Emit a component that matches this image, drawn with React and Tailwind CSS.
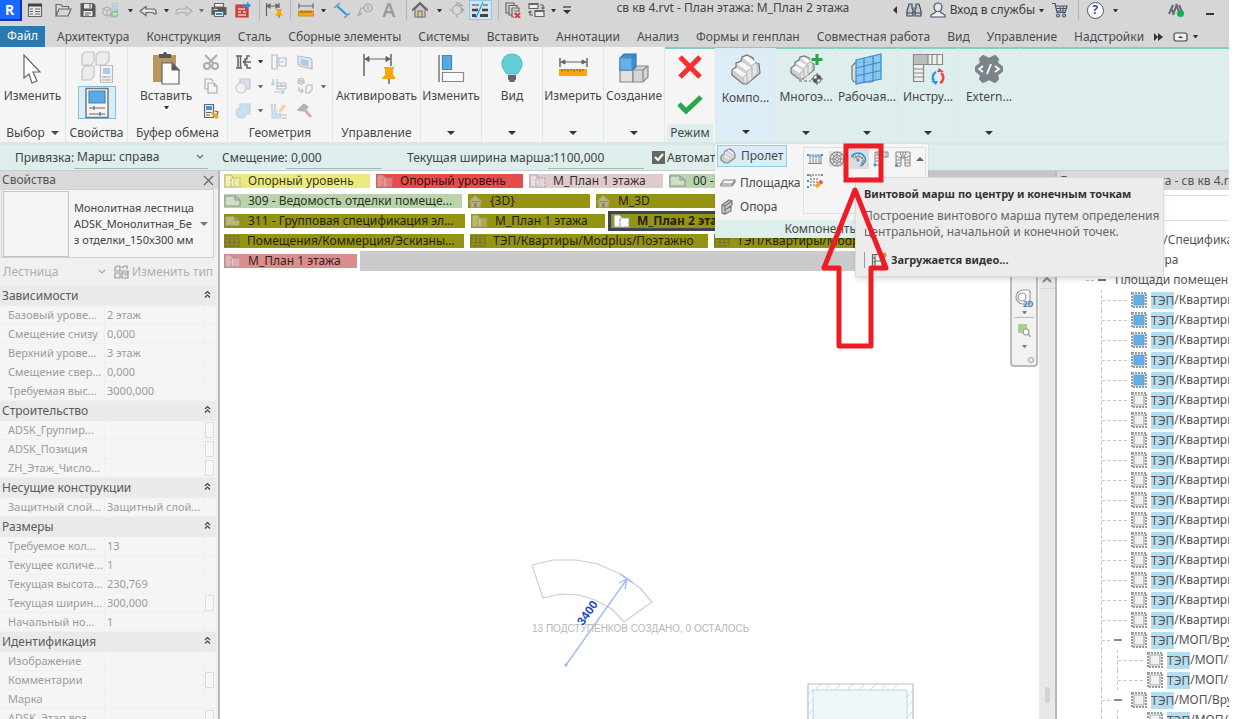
import clsx from "clsx";

const menuTabs = [
  "Архитектура",
  "Конструкция",
  "Сталь",
  "Сборные элементы",
  "Системы",
  "Вставить",
  "Аннотации",
  "Анализ",
  "Формы и генплан",
  "Совместная работа",
  "Вид",
  "Управление",
  "Надстройки"
];

const viewTabs = [
  [
    { text: "Опорный уровень", icon: "plan", cls: "w-[146px] bg-[#ebea80]" },
    { text: "Опорный уровень", icon: "plan", cls: "w-[147px] bg-[#e54c4c]" },
    { text: "М_План 1 этажа", icon: "plan", cls: "w-[134px] bg-[#dfcacc]" },
    { text: "00 - Общие данные", icon: "sheet", cls: "w-[180px] bg-[#b9d3ab]" }
  ],
  [
    { text: "309 - Ведомость отделки помеще...", icon: "sheet", cls: "w-[238px] bg-[#b9d3ab]" },
    { text: "{3D}", icon: "house", cls: "w-[122px] bg-[#959312]" },
    { text: "М_3D", icon: "house", cls: "w-[180px] bg-[#959312]" }
  ],
  [
    { text: "311 - Групповая спецификация эл...", icon: "sheet", cls: "w-[241px] bg-[#959312]" },
    { text: "М_План 1 этажа", icon: "plan", cls: "w-[134px] bg-[#959312]" },
    { text: "М_План 2 этажа", icon: "plan", active: true, cls: "w-[160px] bg-[#959312]" }
  ],
  [
    { text: "Помещения/Коммерция/Эскизны...", icon: "grid", cls: "w-[240px] bg-[#959312]" },
    { text: "ТЭП/Квартиры/Modplus/Поэтажно", icon: "grid", cls: "w-[238px] bg-[#959312]" },
    { text: "ТЭП/Квартиры/Modplus/Сводная", icon: "grid", cls: "w-[240px] bg-[#959312]" }
  ]
];

const propertyGroups = [
  {
    title: "Зависимости",
    rows: [
      ["Базовый урове...", "2 этаж"],
      ["Смещение снизу", "0,000"],
      ["Верхний урове...", "3 этаж"],
      ["Смещение свер...", "0,000"],
      ["Требуемая выс...", "3000,000"]
    ]
  },
  {
    title: "Строительство",
    rows: [
      ["ADSK_Группир...", "", true],
      ["ADSK_Позиция", "", true],
      ["ZH_Этаж_Число...", "", true]
    ]
  },
  { title: "Несущие конструкции", rows: [["Защитный слой...", "Защитный слой..."]] },
  {
    title: "Размеры",
    rows: [
      ["Требуемое кол...", "13"],
      ["Текущее количе...", "1"],
      ["Текущая высота...", "230,769"],
      ["Текущая ширин...", "300,000", true],
      ["Начальный но...", "1"]
    ]
  },
  {
    title: "Идентификация",
    rows: [
      ["Изображение", ""],
      ["Комментарии", "", true],
      ["Марка", ""],
      ["ADSK_Этап воз...", "", true]
    ]
  }
];

const treeRows = [
  ...Array(5).fill({ kind: "filled", text: "/Квартиры" }),
  ...Array(12).fill({ kind: "plain", text: "/Квартиры" }),
  { kind: "parent", text: "/МОП/Вру" },
  { kind: "child", text: "/МОП/Вру" },
  { kind: "child", text: "/МОП/Вру" },
  { kind: "parent", text: "/МОП/Вру" },
  { kind: "child", text: "/МОП/Вру" }
];

function Icon({ w = 16, h = 16, className, children }) {
  return (
    <svg
      width={w}
      height={h}
      viewBox={`0 0 ${w} ${h}`}
      fill="none"
      stroke="#666"
      strokeWidth="1.2"
      className={clsx("block shrink-0", className)}
      aria-hidden="true"
    >
      {children}
    </svg>
  );
}

function Caret({ className, up }) {
  return (
    <svg width="8" height="4" viewBox="0 0 8 4" className={clsx("block shrink-0", className)} aria-hidden="true">
      <path d={up ? "M0 4h8L4 0z" : "M0 0h8L4 4z"} fill="currentColor" />
    </svg>
  );
}

function SmallCaret() {
  return (
    <svg width="5" height="3" viewBox="0 0 5 3" className="block shrink-0 text-[#333]" aria-hidden="true">
      <path d="M0 0h5L3 3H2z" fill="currentColor" />
    </svg>
  );
}

function Slot({ label, className, children }) {
  return (
    <button type="button" aria-label={label} className={clsx("flex h-5 shrink-0 items-center justify-center", className)}>
      {children}
    </button>
  );
}

function Sep({ className }) {
  return (
    <span className={clsx("flex h-5 shrink-0 justify-center", className)}>
      <span className="h-5 w-px bg-[#b4b4b4]" />
    </span>
  );
}

function TitleBar() {
  return (
    <header className="flex h-[26px] items-start overflow-hidden">
      <button type="button" aria-label="Revit" className="h-[21px] w-[22px] shrink-0 border-b-2 border-r-2 border-[#0b3aa8] bg-[#1769ff] pr-px text-[14px] leading-[19px] font-bold text-white">
        R
      </button>
      <Slot label="Главная" className="w-[26px]">
        <Icon>
          <path d="M1.500 2.500h13v12h-13z" fill="#e8e8e8" />
          <path d="M1 3h14" strokeWidth="3" stroke="#444" />
          <path d="M3 7h3M3 9.500h3M3 12h3M8 7h5M8 9.500h5M8 12h5" stroke="#54687a" />
        </Icon>
      </Slot>
      <Slot label="Открыть" className="w-[30px]">
        <Icon w={17}>
          <path d="M1 14V2.500h5l1.500 2h6V7M1 14l3-7h12l-3 7z" />
        </Icon>
      </Slot>
      <Slot label="Сохранить" className="w-5">
        <Icon>
          <path d="M1 1.500h12l2 2v11H1z" fill="#555" />
          <path d="M4 2h8v4.500H4zM3.500 9h9v5h-9z" fill="#e6e6e6" stroke="none" />
          <path d="M5 11h6M5 13h4M10 2v4" />
        </Icon>
      </Slot>
      <Slot label="Синхронизация" className="w-[26px]">
        <Icon w={18} className="opacity-60">
          <path d="M1 7l4-2 4 2v5l-4 2-4-2zM1 7l4 2 4-2M5 9v5" stroke="#999" fill="#ddd" />
          <path d="M10 2h6v6h-6z" fill="#a9cbe6" stroke="none" />
          <ellipse cx="13" cy="2.500" rx="3" ry="1.500" fill="#c6dff0" stroke="#8bb3d3" strokeWidth="0.800" />
          <path d="M9 12a4 4 0 016-2M16 12a4 4 0 01-6 2" stroke="#5cb874" strokeWidth="1.800" />
          <path d="M16 7v4h-4zM8 16v-4h4z" fill="#5cb874" stroke="none" />
        </Icon>
      </Slot>
      <Slot label="Варианты синхронизации" className="w-3"><SmallCaret /></Slot>
      <Slot label="Отменить" className="w-6">
        <Icon w={18}>
          <path d="M1 9l6-4.500V7h7c2 0 3 1 3 3v2h-2c0-1-.5-1.500-2-1.500H7V13.500z" fill="#e4e4e4" />
        </Icon>
      </Slot>
      <Slot label="Список отмены" className="w-3"><SmallCaret /></Slot>
      <Slot label="Повторить" className="w-6">
        <Icon w={18}>
          <path d="M17 9l-6-4.500V7H4c-2 0-3 1-3 3v2h2c0-1 .5-1.500 2-1.500h6V13.500z" stroke="#b1b1b1" />
        </Icon>
      </Slot>
      <Slot label="Список повтора" className="w-[10px] opacity-60"><SmallCaret /></Slot>
      <Slot label="Печать" className="w-[26px]">
        <Icon>
          <path d="M3.500 1.500h9V5h-9z" fill="#eee" />
          <path d="M1 5.500h14v7H1z" fill="#555" />
          <path d="M3.500 9.500h9v5h-9z" fill="#f2f2f2" />
          <path d="M5 12h6" stroke="#2f8bd0" strokeWidth="2" />
          <path d="M2.500 7.500h4" stroke="#ddd" />
        </Icon>
      </Slot>
      <Slot label="Экспорт в PDF" className="w-[22px]">
        <Icon>
          <path d="M1 3h10l2 3v9H1z" fill="#d24545" stroke="#c03434" />
          <path d="M3 7h7M3 10h3M8 10h3M3 13h8" stroke="#fff" />
          <path d="M8 2.500h4V0l4 3.500L12 7V5H8z" fill="#2490e0" stroke="none" />
        </Icon>
      </Slot>
      <Sep className="w-[10px]" />
      <Slot label="Активировать размеры" className="w-5">
        <Icon w={18}>
          <path d="M1.500 1v13M14 1v5M2 4h12M2 4l3-2v4zM14 4l-3-2v4z" />
          <path d="M11 7h6v1.500h-1V11l2 2.500h-8L12 11V8.500h-1z" fill="#fca50c" stroke="none" />
          <path d="M14 13v4" stroke="#777" />
        </Icon>
      </Slot>
      <Sep className="w-3" />
      <Slot label="Измерить" className="w-5">
        <Icon>
          <path d="M1 4h14M1 1.500v5M15 1.500v5" />
          <path d="M.5 9h15v5H.5z" fill="#f7a51c" stroke="#d98a10" strokeWidth="1" />
          <path d="M3 9v2M5 9v2M7 9v2M9 9v2M11 9v2M13 9v2" stroke="#8a5a0c" strokeWidth="1" />
        </Icon>
      </Slot>
      <Slot label="Варианты измерения" className="w-[14px]"><SmallCaret /></Slot>
      <Slot label="Параллельный размер" className="w-6">
        <Icon>
          <path d="M3 4l10 9" stroke="#2f95dc" strokeWidth="2" />
          <path d="M0 6l6-5M10 16l6-5" stroke="#5d9bc6" strokeWidth="1.500" />
        </Icon>
      </Slot>
      <Slot label="Марка" className="w-[22px]">
        <Icon className="opacity-60">
          <circle cx="11" cy="6" r="4" stroke="#888" />
          <path d="M11 4v4M10 5l1-1M7 6H4l-3 8M1 14l4-3" stroke="#888" />
        </Icon>
      </Slot>
      <Slot label="Текст" className="w-[26px] text-[19px] leading-5 font-semibold text-[#9b9b9b]">A</Slot>
      <Sep className="w-2" />
      <Slot label="3D вид" className="w-5">
        <Icon>
          <path d="M3 7v8h10V7L8 2z" fill="#c9c9c9" stroke="#777" />
          <path d="M0 8.500L8 1l8 7.500" strokeWidth="1.800" />
          <path d="M6 9h4v6H6z" fill="#f2c766" stroke="#777" />
        </Icon>
      </Slot>
      <Slot label="Варианты 3D" className="w-[18px]"><SmallCaret /></Slot>
      <Slot label="Разрез" className="w-[18px]">
        <Icon>
          <circle cx="8" cy="8" r="4.500" stroke="#aaa" />
          <path d="M0 8h3M8 13v3M8 0l5 3.500L8 3z" stroke="#aaa" />
          <path d="M11 4l5 4-5 4 1.500-4z" fill="#aaa" stroke="none" />
        </Icon>
      </Slot>
      <Slot label="Тонкие линии" className="w-7">
        <span className="flex h-5 w-[23px] items-center justify-center border border-[#8cc8e8] bg-[#cfe6f2]">
          <Icon w={18}>
            <path d="M1 3h7M12 3h5" stroke="#444" />
            <path d="M1 8h6M11 8h6" strokeWidth="2.500" stroke="#444" />
            <path d="M1 13.500h4M9 13.500h8" strokeWidth="3" stroke="#444" />
            <path d="M12 0L5 16" stroke="#2f95dc" />
          </Icon>
        </span>
      </Slot>
      <Sep className="w-2" />
      <Slot label="Закрыть скрытые" className="w-[22px]">
        <Icon>
          <path d="M4 11H1V1h8v2M4 3.500h8v2M4 3v10h3" />
          <path d="M7 6h7v4M7 6v9h2M9 9h4M9 12h2" />
          <path d="M10 11l5 5M15 11l-5 5" stroke="#e03a3a" strokeWidth="2" />
        </Icon>
      </Slot>
      <Slot label="Переключить окна" className="w-6">
        <Icon w={17}>
          <path d="M1 1.500h9v5H1zM7 8.500h9v6H7z" fill="#eee" />
          <path d="M1 2h9M7 9h9" strokeWidth="2" />
          <path d="M12 3h3v4M13.500 5.500L15 7l1.500-1.500M5 13H2V9M.5 10.500L2 9l1.500 1.500" />
        </Icon>
      </Slot>
      <Slot label="Список окон" className="w-[10px]"><SmallCaret /></Slot>
      <Slot label="Настройка панели" className="w-[18px]">
        <Icon w={10} h={10}>
          <path d="M1 2h8" stroke="#333" />
          <path d="M1 5h8L5 9z" fill="#333" stroke="none" />
        </Icon>
      </Slot>
      <h1 className="min-w-0 flex-1 truncate text-center text-[12px] leading-4 text-[#444]">
        св кв 4.rvt - План этажа: М_План 2 этажа
      </h1>
      <Slot label="Свернуть поиск" className="w-[10px]">
        <Icon w={4} h={8}><path d="M4 0v8L0 4z" fill="#333" stroke="none" /></Icon>
      </Slot>
      <Slot label="Поиск" className="w-7">
        <Icon>
          <path d="M3 2h3v4l1 2v6H1V9zM13 2h-3v4L9 8v6h6V9zM7 6h2M7 10h2" stroke="#3f4a5c" fill="#c6cad1" />
          <path d="M1 11h6M9 11h6" stroke="#3f4a5c" />
        </Icon>
      </Slot>
      <button type="button" className="flex h-5 shrink-0 items-center gap-1 pl-[2px] text-[12px] text-[#3c3c3c]">
        <Icon>
          <path d="M8 1a4 4 0 014 4c0 3-2 5-4 5S4 8 4 5a4 4 0 014-4z" fill="#dfe4ee" stroke="#46546c" />
          <path d="M6 10l-5 3v2h14v-2l-5-3" fill="#eceff5" stroke="#46546c" />
        </Icon>
        Вход в службы
        <SmallCaret />
      </button>
      <Slot label="Магазин" className="w-8">
        <Icon>
          <path d="M0 1.500h3l2 9h9M4 4h11l-1.500 5H5" stroke="#46546c" />
          <path d="M4 6.500h10M8 4l.5 5M11 4v5" stroke="#46546c" strokeWidth="1" />
          <circle cx="6" cy="13.500" r="1.500" stroke="#46546c" />
          <circle cx="12" cy="13.500" r="1.500" stroke="#46546c" />
        </Icon>
      </Slot>
      <Sep className="w-1" />
      <Slot label="Справка" className="w-[30px]">
        <span className="flex size-[17px] items-center justify-center rounded-full border border-[#46546c] bg-white text-[12px] leading-none font-bold text-[#2b55a5]">?</span>
      </Slot>
      <Slot label="Меню справки" className="w-[10px]"><SmallCaret /></Slot>
      <Slot label="Надстройка" className="ml-11 w-6">
        <Icon w={17}>
          <path d="M1 12l4-9M5 13l4-11M8 2l3 8M3 6l3 6M11 3l3 7" stroke="#667" strokeWidth="2" />
          <circle cx="12.500" cy="11.500" r="3.500" fill="#17b24c" stroke="none" />
        </Icon>
      </Slot>
      <Slot label="Свернуть" className="mr-[7px] ml-[10px] w-6">
        <span className="mt-2 h-[2px] w-2 bg-[#333]" />
      </Slot>
    </header>
  );
}

function MenuTabs() {
  return (
    <nav className="flex h-[21px] items-center gap-[17px] overflow-hidden text-[12px] leading-5 whitespace-nowrap text-[#4c4c4c]">
      <a href="#file" className="-mr-[5px] h-[21px] w-[45px] shrink-0 bg-[#2a7ab0] text-center text-white">
        Файл
      </a>
      {menuTabs.map((tab) => (
        <a key={tab} href="#tab" className="shrink-0">
          {tab}
        </a>
      ))}
      <button type="button" aria-label="Ещё" className="-ml-[7px] shrink-0">
        <Icon w={9} h={8}><path d="M0 0l4 4-4 4zM4 0l5 4-5 4z" fill="#333" stroke="none" /></Icon>
      </button>
      <button type="button" aria-label="Вид ленты" className="-ml-[7px] flex shrink-0 items-center gap-[5px]">
        <Icon w={15} h={10}>
          <rect x="1" y="1" width="13" height="8" rx="2" stroke="#444" fill="#eee" />
          <path d="M5 6h5L7.500 4z" fill="#333" stroke="none" />
        </Icon>
        <SmallCaret />
      </button>
    </nav>
  );
}

const bigIcons = {
  cursor: (
    <Icon w={32} h={36}>
      <path d="M8 5v23l5-4 3 9 5-2-4-9h7z" fill="#fff" stroke="#666" />
    </Icon>
  ),
  dimension: (
    <Icon w={36} h={36}>
      <path d="M5 4v22M32 4v12" strokeWidth="1.500" />
      <path d="M6 9h25M6 9l4-2.500v5zM31 9l-4-2.500v5z" fill="#555" strokeWidth="1" />
      <path d="M25 17h10v2h-1v6l3 3v1H23v-1l3-3v-6h-1z" fill="#fba60d" stroke="none" />
      <path d="M30 29v5" strokeWidth="1.500" />
    </Icon>
  ),
  align: (
    <Icon w={30} h={32}>
      <path d="M3 3v27" strokeWidth="2" stroke="#999" />
      <path d="M6.500 3.500h9v14h-9z" fill="#5aa9e2" stroke="#3c88c4" />
      <path d="M6.500 20.500h21v9h-21z" fill="#fafafa" stroke="#888" />
    </Icon>
  ),
  bulb: (
    <Icon w={32} h={34}>
      <path d="M16 3a10 10 0 0110 10c0 4-3 7-5 10H11c-2-3-5-6-5-10A10 10 0 0116 3z" fill="#62cfd8" stroke="#51bcc6" />
      <path d="M12 24h8v4l-2 3h-4l-2-3z" fill="#666" stroke="none" />
    </Icon>
  ),
  measure: (
    <Icon w={32} h={34}>
      <path d="M3 7v9M30 7v9" strokeWidth="1.500" />
      <path d="M4 11h25M4 11l4-2v4zM29 11l-4-2v4z" fill="#555" strokeWidth="1" />
      <path d="M2 18h28v7H2z" fill="#fba60d" stroke="none" />
      <path d="M5 18v3M8 18v2M11 18v3M14 18v2M17 18v3M20 18v2M23 18v3M26 18v2" stroke="#7d5610" strokeWidth="1" />
    </Icon>
  ),
  blocks: (
    <Icon w={34} h={34}>
      <path d="M3 19h13v12H3z" fill="#e0e0e0" stroke="#888" />
      <path d="M16 19l4-4h11v11l-5 5H16z" fill="#d5d5d5" stroke="#888" />
      <path d="M16 19h10v12M26 19l5-4" stroke="#888" />
      <path d="M3 7l4-4h12v12l-4 4H3z" fill="#3f8fd0" stroke="#2f79b5" />
      <path d="M3 7h12v12H3z" fill="#67b1ea" stroke="#4590c9" />
      <path d="M15 7l4-4" stroke="#2f79b5" />
    </Icon>
  ),
  stair: (
    <Icon w={32} h={34}>
      <path d="M2 17l4-3v-4l5-2 1-4 5-2 6 3 1 4 5 2 1 9-13 11h-4L2 22z" fill="#cfcfcf" stroke="#777" />
      <path d="M3 17l4-2 9 6-3 3zM7 11l5-2 9 6-4 3zM13 5l4-2 9 6-4 3z" fill="#f8f8f8" stroke="none" />
      <path d="M13 24l4-3v9h-3zM17 18l5-3v11l-5 4zM22 12l5-2v11l-5 4z" fill="#e4e4e4" stroke="#bbb" strokeWidth="0.800" />
    </Icon>
  ),
  multi: (
    <Icon w={34} h={34}>
      <path d="M2 16l4-3v-3l4-2 1-3 4-1 5 2 1 4 4 2v6L14 27h-4l-8-6z" fill="#cfcfcf" stroke="#777" />
      <path d="M3 16l4-2 6 4-3 3zM7 11l4-2 6 4-3 3zM12 6l3-1 7 4-4 2z" fill="#f8f8f8" stroke="none" />
      <path d="M11 22l4-3v6l-3 2zM15 16l4-2v9l-4 3zM19 11l4-1v9l-4 3z" fill="#e4e4e4" stroke="#bbb" strokeWidth="0.800" />
      <path d="M10 29h12" strokeDasharray="3 2" />
      <path d="M28 2v11M22.500 7.500h11" stroke="#25a84a" strokeWidth="3" />
      <circle cx="28" cy="27" r="4" fill="#fff" />
      <path d="M28 23v4h4a4 4 0 00-4-4zM28 31v-4h-4a4 4 0 004 4z" fill="#555" stroke="none" />
      <path d="M28 21v12M22 27h12" strokeWidth="1" />
    </Icon>
  ),
  plane: (
    <Icon w={34} h={34}>
      <path d="M2 14l4-4h18l2 3v13l-4 4H4l-2-3z" fill="#dedede" stroke="#777" />
      <path d="M6 8l25-6v25L6 32z" fill="#82c0ee" fillOpacity="0.850" stroke="#2f8fd4" />
      <path d="M14 6v24M23 4v24M6 16l25-6M6 24l25-5.500" stroke="#2f8fd4" />
    </Icon>
  ),
  tools: (
    <Icon w={34} h={34}>
      <path d="M2.500 2.500h10v10h-10z" fill="#bdbdbd" stroke="#888" />
      <path d="M12.500 2.500h19v10h-19zM2.500 12.500h10v17h-10z" fill="#f0f0f0" stroke="#888" />
      <path d="M3 3h14v9H3z" fill="#bdbdbd" stroke="none" />
      <path d="M17 3v9M21 3v9M26 3v9M3 17h9M3 21h9M3 25h9" stroke="#888" />
      <rect x="18" y="16" width="16" height="17" fill="#deeeec" stroke="none" />
      <path d="M25 20a6 6 0 00-2 9" stroke="#2f95e4" strokeWidth="2.500" />
      <path d="M20 29h7l-2 4z" fill="#2f95e4" stroke="none" />
      <path d="M29 31a6 6 0 001-10" stroke="#f04545" strokeWidth="2.500" />
      <path d="M33 20h-7l2-4z" fill="#f04545" stroke="none" />
    </Icon>
  ),
  extern: (
    <Icon w={32} h={34}>
      <path d="M10 4l6 3 6-3 3 3-1 4 5 4v4l-5 4 1 4-3 3-6-3-6 3-3-3 1-4-5-4v-4l5-4-1-4z" fill="#7d838a" stroke="#7d838a" strokeWidth="2" strokeLinejoin="round" />
      <path d="M10 14l-4 3 4 3M22 14l4 3-4 3M18 12l-4 10" stroke="#fff" strokeWidth="1.800" />
    </Icon>
  )
};

function RibbonPanel({ className, icon, label, title, selected }) {
  return (
    <section className={clsx("flex shrink-0 flex-col items-center border-r border-[#dcebe9]", selected && "border border-[#7fc4e4]", className)}>
      <button type="button" className="flex flex-col items-center">
        <span className="flex h-[41px] items-center">{bigIcons[icon]}</span>
        <span className="text-[12px] leading-4 whitespace-nowrap">{label}</span>
      </button>
      <span className="mt-auto flex h-[18px] items-center text-[12px]">
        {title || <Caret className="text-[#333]" />}
      </span>
    </section>
  );
}

function Geometry() {
  return (
    <section className="flex w-[105px] shrink-0 flex-col items-center border-r border-[#dcebe9]">
      <div className="mt-[2px] grid w-full grid-cols-[22px_12px_26px_25px_12px] items-center pl-1">
        {/* cope / join / split */}
        <button type="button" aria-label="Врезка" className="flex h-[25px] items-center justify-center">
          <Icon>
            <path d="M1 2h6M1 14h6M3 2v12M5.500 2v12" strokeWidth="1.500" />
            <path d="M15 2h-3v3h-2v6h2v3h4M16 8H8M8 8l3-2M8 8l3 2" strokeWidth="1.500" />
          </Icon>
        </button>
        <span className="flex justify-center"><SmallCaret /></span>
        <button type="button" aria-label="Вырезать проём" className="flex justify-center opacity-40">
          <Icon><path d="M1 1h5v14H1zM6 4h9v8H6" /><path d="M13 8H6l3-3M6 8l3 3" stroke="#2f95dc" /></Icon>
        </button>
        <button type="button" aria-label="Стена" className="flex justify-center opacity-40">
          <Icon><path d="M1 2l12 2 2 2v9L3 12l-2-2z" fill="#ddd" /><path d="M4 5l7 2v5l-7-2z" fill="#3f97dc" stroke="#3f97dc" /></Icon>
        </button>
        <span />

        <button type="button" aria-label="Вырезание" className="flex h-[24px] items-center justify-center opacity-40">
          <Icon><path d="M5 1h10v10h-4a5 5 0 00-6-5z" fill="#9dc8ea" stroke="#d86060" /><circle cx="6" cy="10" r="5" fill="#eee" stroke="#999" /></Icon>
        </button>
        <span className="flex justify-center opacity-70"><SmallCaret /></span>
        <button type="button" aria-label="Балки" className="flex justify-center opacity-40">
          <Icon><path d="M2 1v6M0 5l2 2 2-2M3 14h10M11 12l2 2-2 2" stroke="#2f95dc" /><path d="M6 5h9v3H6zM6 8h9v3H6zM10 5v3M6 1v4" strokeWidth="1" /></Icon>
        </button>
        <button type="button" aria-label="Соединение стен" className="flex justify-center opacity-40">
          <Icon><circle cx="4" cy="3.500" r="3" /><path d="M2 2l4 3M6 2L2 5M2 9v4h4M4 11l2 2-2 2M9 15V9l2-2h4v5l-3 3z" /></Icon>
        </button>
        <span className="flex justify-center opacity-70"><SmallCaret /></span>

        <button type="button" aria-label="Соединить" className="flex h-[25px] items-center justify-center opacity-40">
          <Icon><path d="M5 1h10v10h-4a5 5 0 11-6-6z" fill="#8fc1e8" stroke="#6aa3d0" /></Icon>
        </button>
        <span className="flex justify-center opacity-70"><SmallCaret /></span>
        <button type="button" aria-label="Разделить" className="flex justify-center opacity-40">
          <Icon><path d="M1 1v5M4 1v5" /><path d="M1 7h4v4h5v4H1z" fill="#8fc1e8" stroke="#6aa3d0" /><path d="M8 9l6-7" stroke="#f0a040" strokeWidth="3" /><path d="M11 12h5M11 15h5" /></Icon>
        </button>
        <button type="button" aria-label="Демонтаж" className="flex justify-center opacity-50">
          <Icon><path d="M1 7l6-6 4 3-4 4z" fill="#777" stroke="#666" /><path d="M7 6l7 8" stroke="#b76a5a" strokeWidth="3" /></Icon>
        </button>
        <span />
      </div>
      <span className="mt-auto text-[12px] leading-[18px]">Геометрия</span>
    </section>
  );
}

function Ribbon() {
  return (
    <div className="flex h-[98px] shrink-0 overflow-hidden border-b-[3px] border-[#dae7e4] bg-[#f5f5f5] text-[#484848]">
      <section className="flex w-[66px] shrink-0 flex-col items-center border-r border-[#dcebe9]">
        <button type="button" className="flex flex-col items-center">
          <span className="flex h-[41px] items-center">{bigIcons.cursor}</span>
          <span className="text-[12px] leading-4">Изменить</span>
        </button>
        <button type="button" className="mt-auto flex items-center gap-[6px] text-[12px] leading-[18px]">
          Выбор <Caret />
        </button>
      </section>

      <section className="flex w-[62px] shrink-0 flex-col items-center border-r border-[#dcebe9]">
        <button type="button" aria-label="Типоразмеры" className="mt-[3px]">
          <Icon w={34} h={34}>
            <g stroke="#c4c4c4" fill="#ececec">
              <path d="M2 5l3-3h9v9l-3 4H2zM16 5l3-3h10v9l-4 4h-9zM2 20l3-4h9v10l-3 4H2z" />
            </g>
            <path d="M20.500 15.500h12v17h-12z" fill="#f3f3f3" stroke="#bbb" />
            <path d="M23 18h7v6h-7z" fill="#a8cde9" stroke="none" />
            <path d="M22 27h9M22 30h9M25 26v2M28 29v2" stroke="#aaa" strokeWidth="1" />
          </Icon>
        </button>
        <button type="button" aria-label="Свойства" className="mt-[2px] flex h-[33px] w-[38px] items-center justify-center border border-[#7fc0e6] bg-[#d9ecf7]">
          <Icon w={26} h={32}>
            <path d="M2 1.500h22v29H2z" fill="#f4f4f4" stroke="#777" strokeWidth="1.500" />
            <path d="M5 4h16v12H5z" fill="#5ca9e4" stroke="#3f89c4" />
            <path d="M5 21h16M5 27h16M10 19v4M16 25v4" />
          </Icon>
        </button>
        <span className="mt-auto text-[12px] leading-[18px]">Свойства</span>
      </section>

      <section className="flex w-[100px] shrink-0 flex-col items-center border-r border-[#dcebe9]">
        <div className="flex w-full justify-between pr-2 pl-3">
          <button type="button" className="flex flex-col items-center">
            <span className="flex h-[41px] items-center">
              <Icon w={30} h={34}>
                <path d="M2 4h23v27H2z" fill="#b8965f" stroke="none" />
                <path d="M8 3h4l1-2h2l1 2h4v4H8z" fill="#555" stroke="none" />
                <path d="M11 12h10l7 7v14H11z" fill="#fafafa" stroke="#666" />
                <path d="M21 12v7h7z" fill="#555" />
              </Icon>
            </span>
            <span className="text-[12px] leading-4">Вставить</span>
            <span className="mt-[2px]"><SmallCaret /></span>
          </button>
          <div className="mt-[2px] flex flex-col">
            <button type="button" aria-label="Вырезать" className="flex h-[25px] items-center">
              <Icon className="opacity-50"><circle cx="4" cy="12" r="3" strokeWidth="2" /><circle cx="12" cy="12" r="3" strokeWidth="2" /><path d="M6 9l8-8M10 9L2 1" strokeWidth="2" /></Icon>
            </button>
            <button type="button" aria-label="Копировать" className="flex h-[24px] items-center">
              <Icon className="opacity-50"><path d="M5 11H2V1h6l2 2M5 5h6l3 3v7H5zM11 5v3h3" /></Icon>
            </button>
            <button type="button" aria-label="Копировать свойства" className="flex h-[25px] items-center">
              <Icon><path d="M1.500 1.500h9v13h-9z" fill="#eee" /><path d="M3 3h6v4H3z" fill="#3f97dc" stroke="none" /><path d="M3 9.500h6M3 12h4" /><path d="M8 9l4 1 4 4-3 2-4-4z" fill="#f7a51c" stroke="none" /><path d="M12 8l3 1-1 3" /></Icon>
            </button>
          </div>
        </div>
        <span className="mt-auto text-[12px] leading-[18px] whitespace-nowrap">Буфер обмена</span>
      </section>

      <Geometry />

      <RibbonPanel className="w-[88px]" icon="dimension" label="Активировать" title="Управление" />
      <RibbonPanel className="w-[61px]" icon="align" label="Изменить" />
      <RibbonPanel className="w-[61px]" icon="bulb" label="Вид" />
      <RibbonPanel className="w-[61px]" icon="measure" label="Измерить" />
      <RibbonPanel className="w-[61px]" icon="blocks" label="Создание" />

      <div className="flex min-w-0 flex-1 border-t-2 border-[#80cfc1] bg-[#deeeec]">
        <section className="flex w-[50px] shrink-0 flex-col items-center bg-[#f5f5f5] px-[2px]">
          <button type="button" aria-label="Отмена" className="mt-[4px]">
            <Icon w={26} h={28}><path d="M3 4l20 20M23 4L3 24" stroke="#fb2c2c" strokeWidth="5" /></Icon>
          </button>
          <button type="button" aria-label="Готово" className="mt-3">
            <Icon w={26} h={22}><path d="M2 11l7 7L24 4" stroke="#25a84a" strokeWidth="5" /></Icon>
          </button>
          <span className="mt-auto w-full bg-[#deeeec] text-center text-[12px] leading-[18px]">Режим</span>
        </section>
        <div className="-mt-px flex">
          <RibbonPanel className="w-[61px] bg-[#ddedf7]" selected icon="stair" label="Компо..." />
          <RibbonPanel className="w-[61px]" icon="multi" label="Многоэ..." />
          <RibbonPanel className="w-[61px]" icon="plane" label="Рабочая..." />
          <RibbonPanel className="w-[61px]" icon="tools" label="Инстру..." />
          <RibbonPanel className="w-[61px]" icon="extern" label="Extern..." />
        </div>
      </div>
    </div>
  );
}

function OptionsBar() {
  return (
    <div className="flex h-[26px] shrink-0 items-center overflow-hidden border-b border-[#c4cfcd] bg-[#deeeec] pl-[15px] text-[12px] whitespace-nowrap text-[#444]">
      <label htmlFor="snap" className="w-[56px]">Привязка:</label>
      <span className="relative ml-[3px] flex h-[23px] w-[134px] items-center border-b border-[#a9b5b3]">
        <select id="snap" className="w-full appearance-none bg-transparent pl-[3px] outline-none">
          <option>Марш: справа</option>
        </select>
        <Icon w={8} h={6} className="pointer-events-none absolute right-1"><path d="M1 1l3 3 3-3" /></Icon>
      </span>
      <label htmlFor="offset" className="ml-[14px] w-[61px]">Смещение:</label>
      <input id="offset" defaultValue="0,000" className="ml-[3px] h-[23px] w-[96px] border-b border-[#a9b5b3] bg-transparent pl-[5px] outline-none" />
      <label htmlFor="width" className="ml-[25px] w-[138px]">Текущая ширина марша:</label>
      <input id="width" defaultValue="1100,000" className="ml-[3px] h-[23px] w-[96px] border-b border-[#a9b5b3] bg-transparent pl-[5px] outline-none" />
      <label className="ml-2 flex items-center gap-[2px]">
        <span className="relative flex size-[13px]">
          <input type="checkbox" defaultChecked className="peer size-[13px] appearance-none bg-[#666]" />
          <Icon w={13} h={13} className="pointer-events-none absolute inset-0"><path d="M3 6l3 3 5-6" stroke="#fff" strokeWidth="2" /></Icon>
        </span>
        Автоматическая площадка
      </label>
    </div>
  );
}

function Properties() {
  return (
    <aside className="flex w-[220px] shrink-0 flex-col overflow-hidden border-r-2 border-[#b9b9b9] bg-[#f0f0f0] text-[12px]">
      <div className="flex h-[18px] shrink-0 items-center justify-between bg-[#d9d9d9] pr-1 pl-[2px] text-[#555]">
        <h2>Свойства</h2>
        <button type="button" aria-label="Закрыть">
          <Icon w={11} h={11}><path d="M1 1l9 9M10 1l-9 9" /></Icon>
        </button>
      </div>
      <button type="button" className="mr-1 ml-px flex h-[69px] shrink-0 items-center border border-[#d0d0d0] bg-[#f5f5f5] pl-px text-left text-[11px] text-[#444]">
        <span className="h-[66px] w-[66px] shrink-0 border border-[#c4c4c4]" />
        <span className="ml-[5px] w-[126px] leading-4 whitespace-nowrap">
          Монолитная лестница<br />ADSK_Монолитная_Бе<br />з отделки_150x300 мм
        </span>
        <Caret className="text-[#777]" />
      </button>
      <div className="flex h-[28px] shrink-0 items-center text-[#b0b0b0]">
        <select aria-label="Категория" className="w-[98px] appearance-none bg-transparent pl-[3px] disabled:opacity-100" disabled>
          <option>Лестница</option>
        </select>
        <Icon w={8} h={6}><path d="M1 1l3 3 3-3" stroke="#aaa" /></Icon>
        <button type="button" className="ml-2 flex items-center gap-[3px] whitespace-nowrap">
          <Icon w={15} h={14}>
            <g stroke="#999">
              <path d="M1 3l2-2h3v5H1zM8 3l2-2h3v3M1 8h5v5H1zM8 6h6v7H8z" />
              <path d="M8 8h6M10 10h3" />
            </g>
          </Icon>
          Изменить тип
        </button>
      </div>
      <table className="w-[216px] shrink-0 table-fixed border-separate border-spacing-0 bg-[#f5f5f5] text-left text-[11px] text-[#9c9c9c]">
        <colgroup>
          <col className="w-[105px]" />
          <col className="w-[99px]" />
          <col className="w-[12px]" />
        </colgroup>
        {propertyGroups.map((group) => (
          <tbody key={group.title}>
            <tr className="h-5 bg-[#eaeaea]">
              <th colSpan={2} className="py-0 pl-[2px] text-[12px] leading-4 font-normal text-[#5a5a5a]">{group.title}</th>
              <td className="p-0 align-top">
                <Icon w={7} h={8} className="mt-1"><path d="M1 4l2.500-2.500L6 4M1 7.500L3.500 5 6 7.500" stroke="#444" /></Icon>
              </td>
            </tr>
            {group.rows.map(([name, value, box]) => (
              <tr key={name} className="h-[19px] whitespace-nowrap">
                <td className="border-r border-b border-[#f0f0f0] py-0 pl-2 leading-4">{name}</td>
                <td className="border-r border-b border-[#f0f0f0] py-0 pl-[2px] leading-4">{value}</td>
                <td className="border-b border-[#f0f0f0] p-0">
                  {box && <button type="button" aria-label={`Связать ${name}`} className="ml-px block h-4 w-[9px] border border-[#ddd] bg-[#f7f7f7]" />}
                </td>
              </tr>
            ))}
          </tbody>
        ))}
      </table>
    </aside>
  );
}

function TabIcon({ kind, bright }) {
  if (kind === "sheet") {
    return <Icon w={17} h={12} className="opacity-60"><path d="M1 1h10l5 4v6H1z" fill="#eee" fillOpacity="0.700" stroke="#777" /><path d="M11 1v4h5" stroke="#777" /></Icon>;
  }
  if (kind === "house") {
    return <Icon w={15} h={14} className="opacity-60"><path d="M1 8l6-6 7 6M3 7v6h9V7" fill="#ccc" stroke="#bbb" /><path d="M6 9h3v4H6z" fill="#887" stroke="none" /></Icon>;
  }
  if (kind === "grid") {
    return <Icon w={16} h={12} className="opacity-50"><path d="M1 1h14v10H1zM1 4h14M1 7.500h14M6 1v10M10 1v10" stroke="#555" /></Icon>;
  }
  return (
    <Icon w={17} h={14} className={bright ? "opacity-100" : "opacity-60"}>
      <path d="M1 1h6l3 3v9H1z" fill="#fff" fillOpacity={bright ? 1 : 0.6} stroke="#999" />
      <path d="M7 4h9v9H7z" fill="#fff" fillOpacity={bright ? 1 : 0.4} stroke="#999" strokeDasharray="3 1" />
    </Icon>
  );
}

function ViewTab({ tab }) {
  return (
    <button
      type="button"
      className={clsx(
        "flex shrink-0 items-center gap-[7px] text-left whitespace-nowrap text-black/80",
        tab.active ? "-ml-[3px] h-5 border-[3px] border-[#3c4456] pl-[2px] font-bold" : "h-[14px]",
        tab.cls
      )}
    >
      <TabIcon kind={tab.icon} bright={tab.active} />
      {tab.text}
    </button>
  );
}

function ViewTabs() {
  return (
    <div className="flex shrink-0 flex-col bg-white text-[12px] leading-4">
      {viewTabs.map((row, i) => (
        <div key={i} className={clsx("flex h-5 items-center gap-[6px] overflow-hidden pl-1", i === 0 && "bg-linear-to-r from-white from-80% to-[#c6c6c6] to-80%")}>
          {row.map((tab, j) => (
            <ViewTab key={j} tab={tab} />
          ))}
        </div>
      ))}
      <div className="flex h-5 items-center gap-[3px] pl-1">
        <ViewTab tab={{ text: "М_План 1 этажа", icon: "plan", cls: "w-[133px] bg-[#da8d8d]" }} />
        <span className="h-5 flex-1 bg-[#cbcbcb]" />
      </div>
    </div>
  );
}

function Drawing() {
  return (
    <svg className="absolute top-[281px] left-[300px]" width="420" height="170" viewBox="0 0 420 170" aria-hidden="true">
      <g fill="none" stroke="#cdcdcd" strokeWidth="1.200">
        <path d="M12 13L33 8 56 8 78 12 102 23 120 36 132 50 104 70 92 57 75 48 59 43 40 42 23 46z" />
        <path d="M288 168v-36h105v36" stroke="#bdbdbd" />
      </g>
      <path d="M293 168v-30h94v30" fill="#f0f7fb" stroke="#aed8ea" />
      <path
        d="M289 142l4-5M289 152l4-5M289 162l4-5M296 137l5-5M306 137l5-5M316 137l5-5M328 137l5-5M340 137l5-5M351 137l5-5M362 137l5-5M373 137l5-5M387 145l5-6M387 155l5-6M387 166l5-6"
        stroke="#d4d4d4"
      />
      <g fill="none" stroke="#9db9fb" strokeWidth="1.300">
        <path d="M46 113L107 27M99 31l8-4-2 10M100 22l13 9" />
        <circle cx="46" cy="113" r="1" />
      </g>
    </svg>
  );
}

function NavBar() {
  return (
    <div className="absolute -top-1 right-[1px] flex h-[100px] w-[28px] flex-col items-center rounded-b border-2 border-t-0 border-[#bcbcbc] bg-[#f2f2f2] pt-[22px]">
      <button type="button" aria-label="Штурвал 2D" className="relative flex flex-col items-center">
        <Icon w={20} h={20}>
          <path d="M16 14V3a2 2 0 00-2-2H9a7 7 0 100 14h7z" stroke="#999" fill="#fff" />
          <circle cx="8" cy="8" r="4" stroke="#999" />
        </Icon>
        <span className="absolute top-[11px] left-[9px] text-[8px] leading-2 font-bold text-[#4a86c0]">2D</span>
      </button>
      <span className="mt-[2px] opacity-60"><SmallCaret /></span>
      <span className="mt-[3px] h-px w-5 bg-[#bbb]" />
      <button type="button" aria-label="Зумирование" className="mt-[5px]">
        <Icon w={14} h={14}>
          <path d="M1 1h9v9H1z" fill="#a5cf93" stroke="none" />
          <circle cx="9" cy="9" r="3" fill="#fff" stroke="#999" />
          <path d="M11 11l3 3" stroke="#999" />
        </Icon>
      </button>
      <span className="mt-[8px] opacity-60"><SmallCaret /></span>
      <span className="mt-auto mr-[2px] mb-[2px] size-[6px] self-end rounded-full border border-[#999]" />
    </div>
  );
}

function Workspace() {
  return (
    <main className="flex min-w-0 flex-1 flex-col">
      <ViewTabs />
      <div className="flex min-h-0 flex-1">
        <div className="relative min-w-0 flex-1 overflow-hidden bg-white">
          <Drawing />
          <span className="absolute top-[350px] left-[312px] font-['Liberation_Sans'] text-[10px] leading-4 text-[#b8b8b8]">
            13 ПОДСТУПЕНКОВ СОЗДАНО, 0 ОСТАЛОСЬ
          </span>
          <span className="absolute top-[334px] left-[354px] -rotate-55 font-['Liberation_Sans'] text-[12px] leading-4 font-bold text-[#1848c8]">
            3400
          </span>
          <NavBar />
        </div>
        <div className="flex w-4 shrink-0 flex-col items-center bg-[#e8e8e8]">
          <button type="button" aria-label="Вверх" className="flex h-[18px] w-full items-center justify-center border-b border-[#d6d6d6]">
            <Icon w={10} h={6}><path d="M1 5l4-4 4 4" stroke="#888" strokeWidth="2" /></Icon>
          </button>
          <span className="mt-auto mb-4 h-4 w-[5px] rounded bg-[#d2d2d2]" />
        </div>
      </div>
    </main>
  );
}

function TreeIcon({ filled }) {
  return (
    <Icon w={16} h={16}>
      <path d="M1 1h14v14H1z" stroke="#999" strokeWidth="2" strokeDasharray="2 1" />
      <path d="M3 3h10v10H3z" fill={filled ? "#66aee6" : "#f2f2f2"} stroke={filled ? "#5b9ed4" : "#a8a8a8"} />
    </Icon>
  );
}

function TreeRow({ row }) {
  const parent = row.kind === "parent";
  const child = row.kind === "child";
  return (
    <li className="flex h-5 items-center whitespace-nowrap">
      <span className="ml-11 h-5 w-0 shrink-0 border-l border-dashed border-[#c4c4c4]" />
      {child && <span className="ml-[15px] h-5 w-0 shrink-0 border-l border-dashed border-[#c4c4c4]" />}
      <span className={clsx("h-0 shrink-0 border-t border-dashed border-[#c4c4c4]", parent ? "w-2" : "w-[25px]")} />
      {parent && <span className="mr-[5px] ml-1 h-[2px] w-2 shrink-0 bg-[#888]" />}
      <span className="mr-1 ml-1 shrink-0"><TreeIcon filled={row.kind === "filled"} /></span>
      <mark className="bg-[#b3def1] leading-[17px] text-[#555]">ТЭП</mark>
      {row.text}
    </li>
  );
}

function Browser() {
  return (
    <aside className="flex w-[174px] shrink-0 flex-col overflow-hidden border-l-2 border-[#b9b9b9] bg-white text-[12px] whitespace-nowrap text-[#555]">
      <h2 className="h-[19px] shrink-0 bg-[#d9d9d9] pl-[2px] leading-[19px]">
        Диспетчер проекта - св кв 4.rvt
      </h2>
      <div className="mt-[5px] h-[26px] shrink-0 border-y border-[#dedede]" />
      <p className="mt-[9px] pl-[83px] leading-5">ТЭП/Спецификация</p>
      <p className="pl-[49px] leading-5">Архитектура</p>
      <p className="flex items-center pl-[29px] leading-5">
        <span className="w-2 shrink-0 border-t border-dashed border-[#bbb]" />
        <span className="mr-[9px] ml-1 h-[2px] w-2 shrink-0 bg-[#777]" />
        Площади помещений
      </p>
      <ul className="min-h-0 flex-1 overflow-hidden">
        {treeRows.map((row, i) => (
          <TreeRow key={i} row={row} />
        ))}
      </ul>
    </aside>
  );
}

function ComponentsMenu() {
  return (
    <div className="absolute top-[144px] left-[715px] flex h-[94px] w-[213px] flex-col bg-[#f5f5f5] text-[12px] text-[#484848] shadow">
      <div className="flex min-h-0 flex-1">
        <div className="flex w-[86px] flex-col pt-px pl-[2px] whitespace-nowrap">
          <button type="button" className="flex h-[22px] w-[70px] shrink-0 items-center gap-[5px] border border-[#92cdea] bg-[#d9edf7] pl-[2px]">
            <Icon><path d="M1 8l3-2 1-3 5-2 3 2 2 3v4l-7 5H5L1 12z" fill="#d0d0d0" stroke="#888" /><path d="M5 4l6 4M8 2l6 4M4 7l5 4" stroke="#f5f5f5" /></Icon>
            Пролет
          </button>
          <button type="button" className="mt-[3px] flex h-[25px] shrink-0 items-center gap-1 pl-[2px]">
            <Icon w={17}><path d="M5 5h11l-3 4H2zM2 9v2h11l3-4V5M13 9v2" fill="#eee" stroke="#888" /></Icon>
            Площадка
          </button>
          <button type="button" className="flex h-[24px] shrink-0 items-center gap-[5px] pl-[2px]">
            <Icon><path d="M3 6l7-5 3 1v4l-4 3 3-1v4l-6 3-3-1z" fill="#ccc" stroke="#777" /><path d="M6 7v8M3 6l3 1 7-5M6 11l3-2" stroke="#777" /></Icon>
            Опора
          </button>
        </div>
        <div className="mt-[3px] ml-[2px] flex h-[67px] w-[123px] border border-[#e0e0e0]">
          <div className="grid grid-cols-[22px_22px_22px_22px_22px] grid-rows-[22px_22px] place-items-center">
            <button type="button" aria-label="Прямой марш">
              <Icon><path d="M2 5h12M1 12.500h14M3 5v7M6 5v7M9 5v7M12 5v7M14 5v7" strokeWidth="1" stroke="#888" /><path d="M1 4h14" stroke="#7bb8e8" /><path d="M0 3h2v2H0zM14 3h2v2h-2z" fill="#2f95e4" stroke="none" /></Icon>
            </button>
            <button type="button" aria-label="Винтовой марш" className="bg-[#e2e2e2]">
              <Icon><circle cx="8" cy="8" r="7" stroke="#888" /><circle cx="8" cy="8" r="4" stroke="#999" /><circle cx="8" cy="8" r="1.500" fill="#fff" stroke="#888" /><path d="M8 1v5M8 10v5M1 8h5M10 8h5M3 3l3 3M13 13l-3-3M13 3l-3 3M3 13l3-3" strokeWidth="1" stroke="#888" /></Icon>
            </button>
            <button type="button" aria-label="Винтовой марш по центру и конечным точкам" className="bg-[#dcdcdc] p-[2px]">
              <Icon><path d="M1 5a7.500 7.500 0 0112 0c3 4 1 8-4 10" stroke="#3296e0" strokeWidth="1.500" /><path d="M3 8a5 5 0 019 0c1 2 0 4-2 5M6 8L4 4M8 7V3M10 8l3-3M11 10h4M10 11l3 3" strokeWidth="1" stroke="#888" /><circle cx="7" cy="9" r="1.500" fill="#3296e0" stroke="none" /><circle cx="1.500" cy="5" r="1.500" fill="#3296e0" stroke="none" /></Icon>
            </button>
            <button type="button" aria-label="Забежный Г-образный марш">
              <Icon><path d="M2 1h13v5H8v8H2zM2 4h6M2 7h6M2 10h6M8 6L3 1M10 1v5M13 1v5" strokeWidth="1" stroke="#888" /><circle cx="2" cy="14" r="1.500" fill="#2f95e4" stroke="none" /></Icon>
            </button>
            <button type="button" aria-label="Забежный П-образный марш">
              <Icon><path d="M1 1h14v14h-5V7H6v8H1zM1 5l5 2M1 9h5M1 12h5M10 9h5M10 12h5M15 5l-5 2M5 1l2 6M11 1L9 7M8 1v6" strokeWidth="1" stroke="#888" /><circle cx="1.500" cy="14.500" r="1.500" fill="#2f95e4" stroke="none" /></Icon>
            </button>
            <button type="button" aria-label="Эскиз">
              <Icon><path d="M2 2h12M4 2v12M6 6h6M6 9h5M6 12h3" strokeWidth="1" strokeDasharray="2 1" /><path d="M0 1h2v2H0zM14 1h2v2h-2zM0 7h2v2H0zM0 13h2v2H0z" fill="#2f95e4" stroke="none" /><path d="M9 14l5-5" stroke="#f7a51c" strokeWidth="3.500" /><path d="M13 10l2-2" stroke="#e8553c" strokeWidth="3.500" /></Icon>
            </button>
          </div>
          <span className="mt-[9px] ml-[2px]"><Caret up className="text-[#666]" /></span>
        </div>
      </div>
      <div className="bg-[#deeeec] text-center leading-[18px]">Компоненты</div>
    </div>
  );
}

function Tooltip() {
  return (
    <div role="tooltip" className="absolute top-[177px] left-[855px] h-[100px] w-[309px] border border-[#dcdcdc] bg-[#ececec] pt-2 pl-2 text-[12px] leading-4 whitespace-nowrap text-[#666] shadow-md">
      <p className="text-[11px] font-bold text-[#333]">Винтовой марш по центру и конечным точкам</p>
      <p className="mt-[6px]">Построение винтового марша путем определения<br />центральной, начальной и конечной точек.</p>
      <p className="mt-3 flex items-center text-[11px] font-bold text-[#333]">
        <span className="mr-[6px] h-4 w-px bg-[#999]" />
        <Icon className="mr-1"><path d="M1.500 2.500h12v12h-12zM4 2v12M1 6h3M1 10h3M4 9h8M11 5v9" /><circle cx="13" cy="3" r="2.500" fill="#f0832a" stroke="none" /></Icon>
        Загружается видео...
      </p>
    </div>
  );
}

function Callout() {
  return (
    <svg className="pointer-events-none absolute top-[140px] left-[820px]" width="72" height="212" viewBox="0 0 72 212" aria-hidden="true">
      <g fill="none" stroke="#ee1c24" strokeWidth="5">
        <path d="M26 6h35v34H26z" />
        <path d="M35 50L4 128h15v78h32v-78h15z" strokeLinejoin="round" />
      </g>
    </svg>
  );
}

export default function App() {
  return (
    <div className="relative flex h-screen flex-col overflow-hidden bg-white pr-[5px] font-['Noto_Sans','Open_Sans',sans-serif]">
      <div className="shrink-0 bg-[#d6d6d6]">
        <TitleBar />
        <MenuTabs />
      </div>
      <Ribbon />
      <OptionsBar />
      <div className="flex min-h-0 flex-1 overflow-hidden">
        <Properties />
        <Workspace />
        <Browser />
      </div>
      <ComponentsMenu />
      <Tooltip />
      <Callout />
    </div>
  );
}
